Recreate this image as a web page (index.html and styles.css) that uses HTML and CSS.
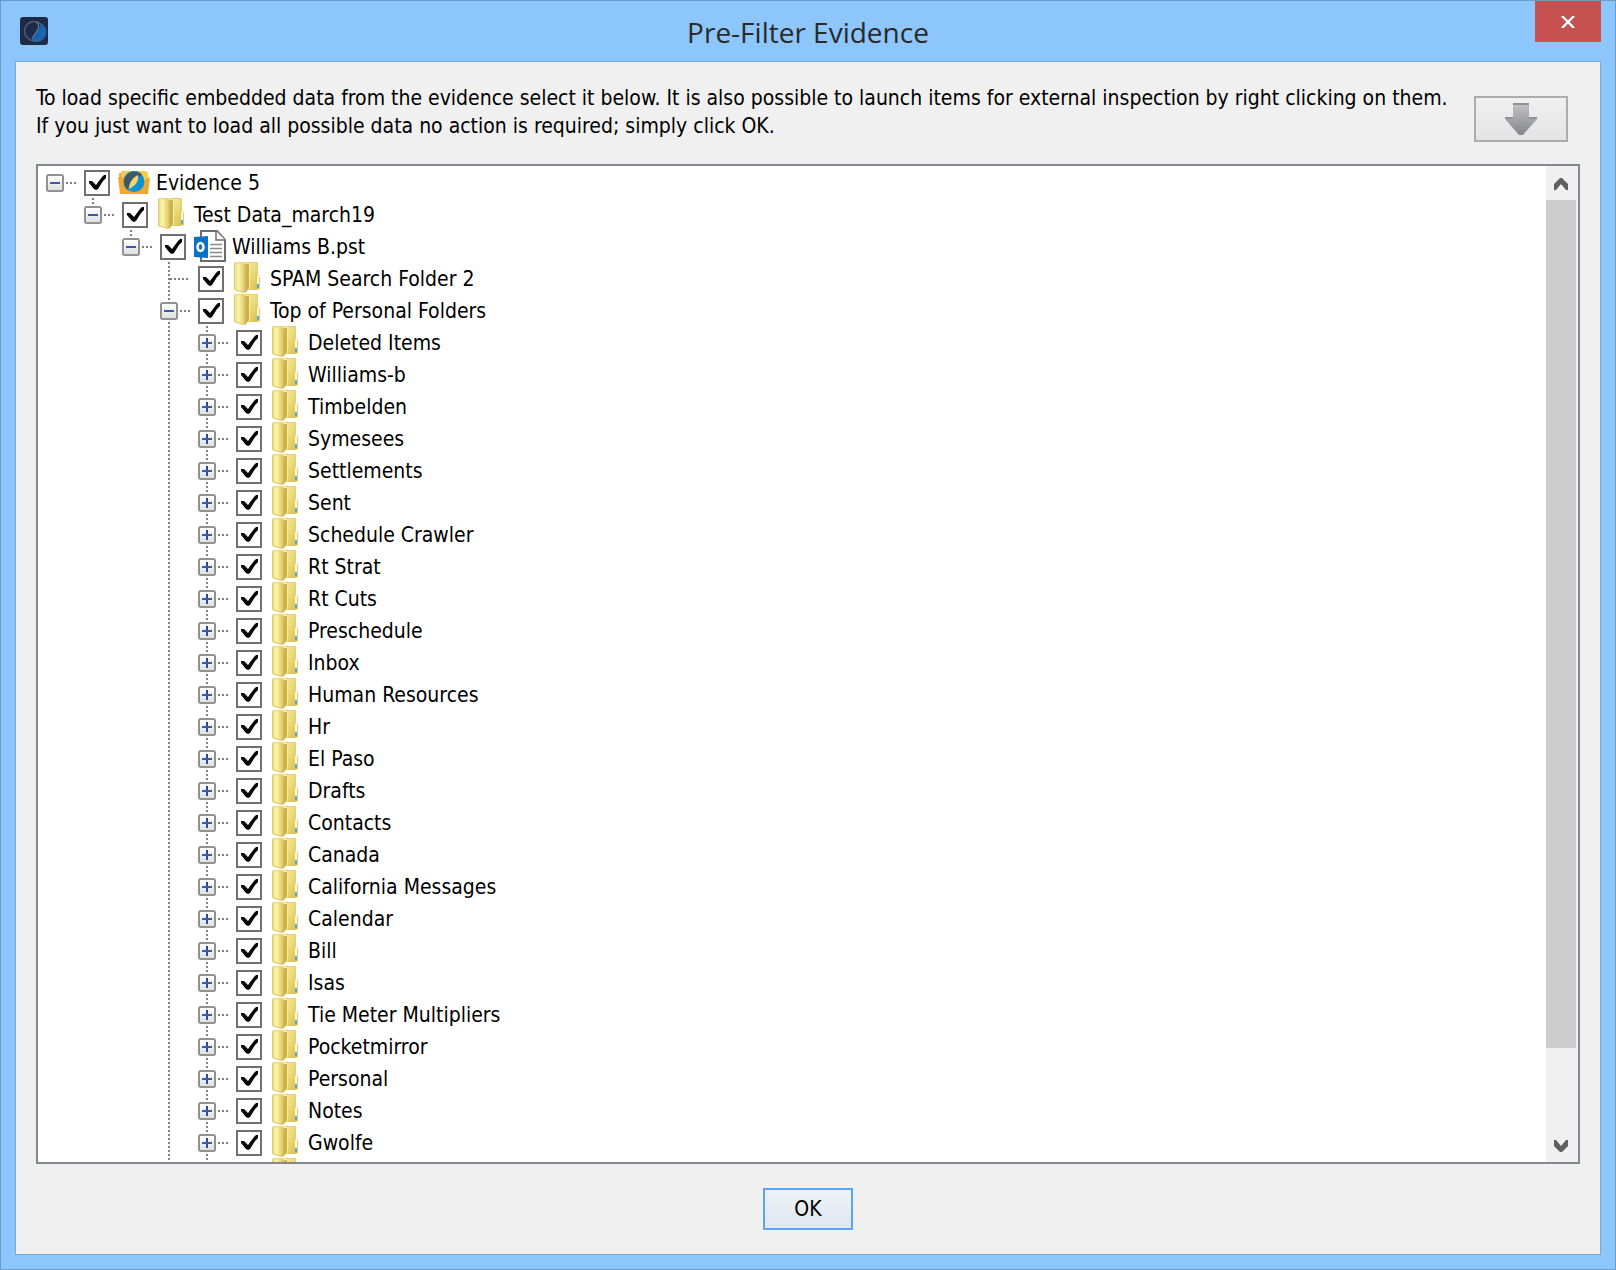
FILE: index.html
```html
<!DOCTYPE html>
<html lang="en">
<head>
<meta charset="utf-8">
<title>Pre-Filter Evidence</title>
<link rel="stylesheet" href="styles.css">
</head>
<body>
<svg class="defs" aria-hidden="true">
  <defs>
    <linearGradient id="g-back" x1="0" y1="0" x2="1" y2="1"><stop offset="0" stop-color="#f6efa6"/><stop offset="0.5" stop-color="#ead878"/><stop offset="1" stop-color="#d6b944"/></linearGradient>
    <linearGradient id="g-front" x1="0" y1="0" x2="1" y2="0"><stop offset="0" stop-color="#eadd80"/><stop offset="0.35" stop-color="#faf4ae"/><stop offset="0.7" stop-color="#e8d575"/><stop offset="1" stop-color="#c8ab42"/></linearGradient>
    <linearGradient id="g-arrow" x1="0" y1="0" x2="0" y2="1"><stop offset="0" stop-color="#c4c4c6"/><stop offset="1" stop-color="#85868a"/></linearGradient>
    <symbol id="folder" viewBox="0 0 32 32">
      <path d="M12 0h14v13l2 2v12l-4 1H12z" fill="url(#g-back)"/>
      <path d="M14 0.500h11.500v13l2 2V27" fill="none" stroke="#e3cd78"/>
      <path d="M13 2h4v24l-4 5z" fill="#cdb24c"/>
      <path d="M17.500 2v25" stroke="#f5ecaa"/>
      <path d="M2 1l9-1 4 3v26l-3 2-10-3z" fill="url(#g-front)"/>
      <path d="M2.500 1.500v26l9 3" fill="none" stroke="#e0ca6c"/>
      <path d="M2 1l9-0.500 4 2.500" fill="none" stroke="#e3cf72"/>
      <path d="M25 14h2v8h-2z" fill="#fbf8d4"/>
      <path d="M25 22h2v4h-2z" fill="#4fb3cf"/>
    </symbol>
    <symbol id="pst" viewBox="0 0 32 32">
      <path d="M7 1h16l8 9v21H7z" fill="#fff" stroke="#6d6d6d" stroke-width="2"/>
      <path d="M22 1v9h9" fill="#fff" stroke="#6d6d6d" stroke-width="1.500"/>
      <path d="M16 14.500h12M16 18.500h12M16 22.500h12M16 26.500h12" stroke="#8a8a8a" stroke-width="1.500"/>
      <path d="M0 7l14-1v22L0 27z" fill="#0b72c6"/>
      <ellipse cx="6.500" cy="17" rx="3" ry="4" fill="none" stroke="#fff" stroke-width="2.500"/>
    </symbol>
  </defs>
</svg>
<main class="window">
  <header class="titlebar">
    <svg class="app-icon" viewBox="0 0 28 28" aria-hidden="true">
      <rect width="28" height="28" rx="3" fill="#1f2b45"/>
      <path d="M21 6a10 10 0 0 1-9 18c-1-5 7-8 9-18z" fill="#0f66b8"/>
      <circle cx="14" cy="14" r="9.500" fill="none" stroke="#48607f" stroke-width="1.500"/>
      <path d="M16 5q4 2 2 7-2 4-6 9" fill="none" stroke="#5f7a99" stroke-width="1.200"/>
    </svg>
    <h1 class="title">Pre-Filter Evidence</h1>
    <button class="close" type="button" aria-label="Close"><svg viewBox="0 0 14 12" aria-hidden="true"><path d="M1 0l12 12M13 0L1 12" stroke="#fff" stroke-width="2.400"/></svg></button>
  </header>
  <section class="content">
    <div class="intro">
      <p class="message">To load specific embedded data from the evidence select it below. It is also possible to launch items for external inspection by right clicking on them.<br>If you just want to load all possible data no action is required; simply click OK.</p>
      <button class="down" type="button" aria-label="Move down"><svg viewBox="0 0 32 32" aria-hidden="true"><path d="M8 0h16v14h8v2L18 32h-4L0 16v-2h8z" fill="url(#g-arrow)"/><path d="M8 1h16M0 15h8M24 15h8" stroke="#929295" stroke-width="2"/></svg></button>
    </div>
    <div class="pane">
      <div class="tree">
        <ul class="root">
          <li><div class="row"><button class="toggle open" type="button" aria-label="Collapse"></button><label><input type="checkbox" checked><svg class="icon" viewBox="0 -2 32 32" aria-hidden="true">
            <path d="M1 5h5l3 3h21v18H3z" fill="#e9a62c"/><path d="M3 3h25v20H3z" fill="#f3c65c"/><path d="M23 4h7l-1 22H9z" fill="#ffcb3d"/><path d="M0 9h6l3 10h13l7-9h3l-2 16H2z" fill="#f0a92e"/>
            <circle cx="16" cy="13.500" r="10.500" fill="#0c93d3"/><path d="M24 6.500A10.500 10.500 0 1 0 9 21.500c3-2 2-5 4-8s8-3 11-7z" fill="#3d5866"/><path d="M20 7c1 5-1 10-9 14 0-6 3-11 9-14z" fill="#f7d46b"/></svg><span>Evidence 5</span></label></div>
            <ul>
              <li class="last"><div class="row"><button class="toggle open" type="button" aria-label="Collapse"></button><label><input type="checkbox" checked><svg class="icon"><use href="#folder"/></svg><span>Test Data_march19</span></label></div>
                <ul>
                  <li class="last"><div class="row"><button class="toggle open" type="button" aria-label="Collapse"></button><label><input type="checkbox" checked><svg class="icon"><use href="#pst"/></svg><span>Williams B.pst</span></label></div>
                    <ul>
                      <li><div class="row leaf"><label><input type="checkbox" checked><svg class="icon"><use href="#folder"/></svg><span>SPAM Search Folder 2</span></label></div></li>
                      <li><div class="row"><button class="toggle open" type="button" aria-label="Collapse"></button><label><input type="checkbox" checked><svg class="icon"><use href="#folder"/></svg><span>Top of Personal Folders</span></label></div>
                        <ul>
                          <li><div class="row"><button class="toggle" type="button" aria-label="Expand"></button><label><input type="checkbox" checked><svg class="icon"><use href="#folder"/></svg><span>Deleted Items</span></label></div></li>
                          <li><div class="row"><button class="toggle" type="button" aria-label="Expand"></button><label><input type="checkbox" checked><svg class="icon"><use href="#folder"/></svg><span>Williams-b</span></label></div></li>
                          <li><div class="row"><button class="toggle" type="button" aria-label="Expand"></button><label><input type="checkbox" checked><svg class="icon"><use href="#folder"/></svg><span>Timbelden</span></label></div></li>
                          <li><div class="row"><button class="toggle" type="button" aria-label="Expand"></button><label><input type="checkbox" checked><svg class="icon"><use href="#folder"/></svg><span>Symesees</span></label></div></li>
                          <li><div class="row"><button class="toggle" type="button" aria-label="Expand"></button><label><input type="checkbox" checked><svg class="icon"><use href="#folder"/></svg><span>Settlements</span></label></div></li>
                          <li><div class="row"><button class="toggle" type="button" aria-label="Expand"></button><label><input type="checkbox" checked><svg class="icon"><use href="#folder"/></svg><span>Sent</span></label></div></li>
                          <li><div class="row"><button class="toggle" type="button" aria-label="Expand"></button><label><input type="checkbox" checked><svg class="icon"><use href="#folder"/></svg><span>Schedule Crawler</span></label></div></li>
                          <li><div class="row"><button class="toggle" type="button" aria-label="Expand"></button><label><input type="checkbox" checked><svg class="icon"><use href="#folder"/></svg><span>Rt Strat</span></label></div></li>
                          <li><div class="row"><button class="toggle" type="button" aria-label="Expand"></button><label><input type="checkbox" checked><svg class="icon"><use href="#folder"/></svg><span>Rt Cuts</span></label></div></li>
                          <li><div class="row"><button class="toggle" type="button" aria-label="Expand"></button><label><input type="checkbox" checked><svg class="icon"><use href="#folder"/></svg><span>Preschedule</span></label></div></li>
                          <li><div class="row"><button class="toggle" type="button" aria-label="Expand"></button><label><input type="checkbox" checked><svg class="icon"><use href="#folder"/></svg><span>Inbox</span></label></div></li>
                          <li><div class="row"><button class="toggle" type="button" aria-label="Expand"></button><label><input type="checkbox" checked><svg class="icon"><use href="#folder"/></svg><span>Human Resources</span></label></div></li>
                          <li><div class="row"><button class="toggle" type="button" aria-label="Expand"></button><label><input type="checkbox" checked><svg class="icon"><use href="#folder"/></svg><span>Hr</span></label></div></li>
                          <li><div class="row"><button class="toggle" type="button" aria-label="Expand"></button><label><input type="checkbox" checked><svg class="icon"><use href="#folder"/></svg><span>El Paso</span></label></div></li>
                          <li><div class="row"><button class="toggle" type="button" aria-label="Expand"></button><label><input type="checkbox" checked><svg class="icon"><use href="#folder"/></svg><span>Drafts</span></label></div></li>
                          <li><div class="row"><button class="toggle" type="button" aria-label="Expand"></button><label><input type="checkbox" checked><svg class="icon"><use href="#folder"/></svg><span>Contacts</span></label></div></li>
                          <li><div class="row"><button class="toggle" type="button" aria-label="Expand"></button><label><input type="checkbox" checked><svg class="icon"><use href="#folder"/></svg><span>Canada</span></label></div></li>
                          <li><div class="row"><button class="toggle" type="button" aria-label="Expand"></button><label><input type="checkbox" checked><svg class="icon"><use href="#folder"/></svg><span>California Messages</span></label></div></li>
                          <li><div class="row"><button class="toggle" type="button" aria-label="Expand"></button><label><input type="checkbox" checked><svg class="icon"><use href="#folder"/></svg><span>Calendar</span></label></div></li>
                          <li><div class="row"><button class="toggle" type="button" aria-label="Expand"></button><label><input type="checkbox" checked><svg class="icon"><use href="#folder"/></svg><span>Bill</span></label></div></li>
                          <li><div class="row"><button class="toggle" type="button" aria-label="Expand"></button><label><input type="checkbox" checked><svg class="icon"><use href="#folder"/></svg><span>Isas</span></label></div></li>
                          <li><div class="row"><button class="toggle" type="button" aria-label="Expand"></button><label><input type="checkbox" checked><svg class="icon"><use href="#folder"/></svg><span>Tie Meter Multipliers</span></label></div></li>
                          <li><div class="row"><button class="toggle" type="button" aria-label="Expand"></button><label><input type="checkbox" checked><svg class="icon"><use href="#folder"/></svg><span>Pocketmirror</span></label></div></li>
                          <li><div class="row"><button class="toggle" type="button" aria-label="Expand"></button><label><input type="checkbox" checked><svg class="icon"><use href="#folder"/></svg><span>Personal</span></label></div></li>
                          <li><div class="row"><button class="toggle" type="button" aria-label="Expand"></button><label><input type="checkbox" checked><svg class="icon"><use href="#folder"/></svg><span>Notes</span></label></div></li>
                          <li><div class="row"><button class="toggle" type="button" aria-label="Expand"></button><label><input type="checkbox" checked><svg class="icon"><use href="#folder"/></svg><span>Gwolfe</span></label></div></li>
                          <li><div class="row"><button class="toggle" type="button" aria-label="Expand"></button><label><input type="checkbox" checked aria-label="Folder"><svg class="icon"><use href="#folder"/></svg></label></div></li>
                        </ul>
                      </li>
                    </ul>
                  </li>
                </ul>
              </li>
            </ul>
          </li>
        </ul>
      </div>
      <div class="scrollbar">
        <button class="step" type="button" aria-label="Scroll up"><svg viewBox="0 0 14 12" aria-hidden="true"><path d="M6 0h2l6 6v6h-2L7 6l-5 6H0V6z" fill="#606060"/></svg></button>
        <div class="track"><div class="thumb"></div></div>
        <button class="step" type="button" aria-label="Scroll down"><svg viewBox="0 0 14 12" aria-hidden="true"><path d="M6 12h2l6-6V0h-2L7 6 2 0H0v6z" fill="#606060"/></svg></button>
      </div>
    </div>
    <footer class="actions"><button class="ok" type="button">OK</button></footer>
  </section>
</main>
</body>
</html>
```
FILE: styles.css
```css
* { box-sizing: border-box; }

body {
  margin: 0;
  font: 21px/28px "DejaVu Sans Condensed", "DejaVu Sans", sans-serif;
  color: #000;
}

button { padding: 0; border: 0; font: inherit; color: inherit; }
svg { display: block; }
.defs { position: absolute; width: 0; height: 0; }

.window {
  display: flex;
  flex-direction: column;
  height: 100vh;
  padding: 0 14px 14px;
  border: 1px solid #6c9bc6;
  background: #8cc6fb;
}

/* Title bar */
.titlebar {
  display: grid;
  grid-template-columns: 66px 1fr 66px;
  flex: none;
  height: 60px;
}
.app-icon { width: 28px; height: 28px; margin: 16px 0 0 5px; }
.title {
  margin: 0;
  font: 400 28px/62px "Open Sans", sans-serif;
  text-align: center;
  color: #2a2a2a;
}
.close {
  display: grid;
  place-items: center;
  height: 41px;
  background: #c75050;
}
.close svg { width: 14px; height: 12px; }

.content {
  display: flex;
  flex-direction: column;
  flex: 1;
  min-height: 0;
  padding: 0 20px;
  border: 1px solid #7aa9d6;
  background: #f0f0f0;
}

/* Message */
.intro {
  display: flex;
  justify-content: space-between;
  align-items: flex-start;
  gap: 8px;
  flex: none;
  padding: 22px 12px 0 0;
  min-height: 102px;
}
.message { margin: 0; }
.down {
  display: grid;
  place-items: center;
  flex: none;
  width: 94px;
  height: 46px;
  margin-top: 12px;
  border: 2px solid #acacac;
  background: linear-gradient(#f0f0f0, #e4e4e4);
}
.down svg { width: 32px; height: 32px; }

/* Tree */
.pane {
  display: flex;
  flex: 1;
  min-height: 0;
  border: 2px solid #828790;
  background: #fff;
}
.tree { flex: 1; overflow: hidden; padding-left: 8px; }
.tree ul { margin: 0; padding: 0 0 0 38px; list-style: none; }
.tree .root { padding: 0; }
.tree li {
  background: repeating-linear-gradient(#808080 0 2px, transparent 2px 4px) 8px 0 / 2px 100% no-repeat;
}
.tree .last { background-size: 2px 16px; }
.tree .root > li { background: none; }

.row {
  display: flex;
  height: 32px;
  background: repeating-linear-gradient(90deg, #808080 0 2px, transparent 2px 4px) 20px 16px / 10px 2px no-repeat;
}
.leaf {
  padding-left: 18px;
  background-position: 10px 16px;
  background-size: 18px 2px;
}
.toggle {
  flex: none;
  width: 18px;
  height: 18px;
  margin-top: 8px;
  border: 2px solid #919191;
  border-radius: 2px;
  outline: 2px solid #fff;
  background:
    linear-gradient(#3d5aa5, #3d5aa5) center / 10px 2px no-repeat,
    linear-gradient(#2b4a99, #2b4a99) center / 2px 10px no-repeat,
    linear-gradient(#fff, #e0e0e0);
}
.toggle.open {
  background:
    linear-gradient(#3d5aa5, #3d5aa5) center / 10px 2px no-repeat,
    linear-gradient(#fff, #e0e0e0);
}
.row label { display: flex; padding-left: 20px; line-height: 34px; white-space: nowrap; }
.row input {
  appearance: none;
  width: 26px;
  height: 26px;
  margin: 4px 8px 0 0;
  border: 2px solid #707070;
  background: #fff;
}
.row input:checked {
  background: #fff url("data:image/svg+xml,%3Csvg xmlns='http://www.w3.org/2000/svg' viewBox='0 0 22 22'%3E%3Cpath d='M3 9h3l4 4 6-8 2-2h2v3l-3 3-5 8-2 1-2-1-5-6z'/%3E%3C/svg%3E") center / 22px 22px no-repeat;
}
.icon { width: 32px; height: 32px; margin-right: 6px; }

/* Scroll bar */
.scrollbar {
  display: flex;
  flex-direction: column;
  flex: none;
  width: 32px;
  background: #f0f0f0;
}
.step {
  display: grid;
  place-items: center;
  width: 30px;
  height: 34px;
  padding-top: 2px;
  background: none;
}
.step svg { width: 14px; height: 12px; }
.track { flex: 1; }
.thumb { width: 30px; height: 91.400%; background: #cdcdcd; }

/* Buttons */
.actions { display: flex; justify-content: center; flex: none; padding: 24px 0; }
.ok {
  width: 90px;
  height: 42px;
  border: 2px solid #5aa5f5;
  background: linear-gradient(#eef2f7, #dfe7f1);
}
```
